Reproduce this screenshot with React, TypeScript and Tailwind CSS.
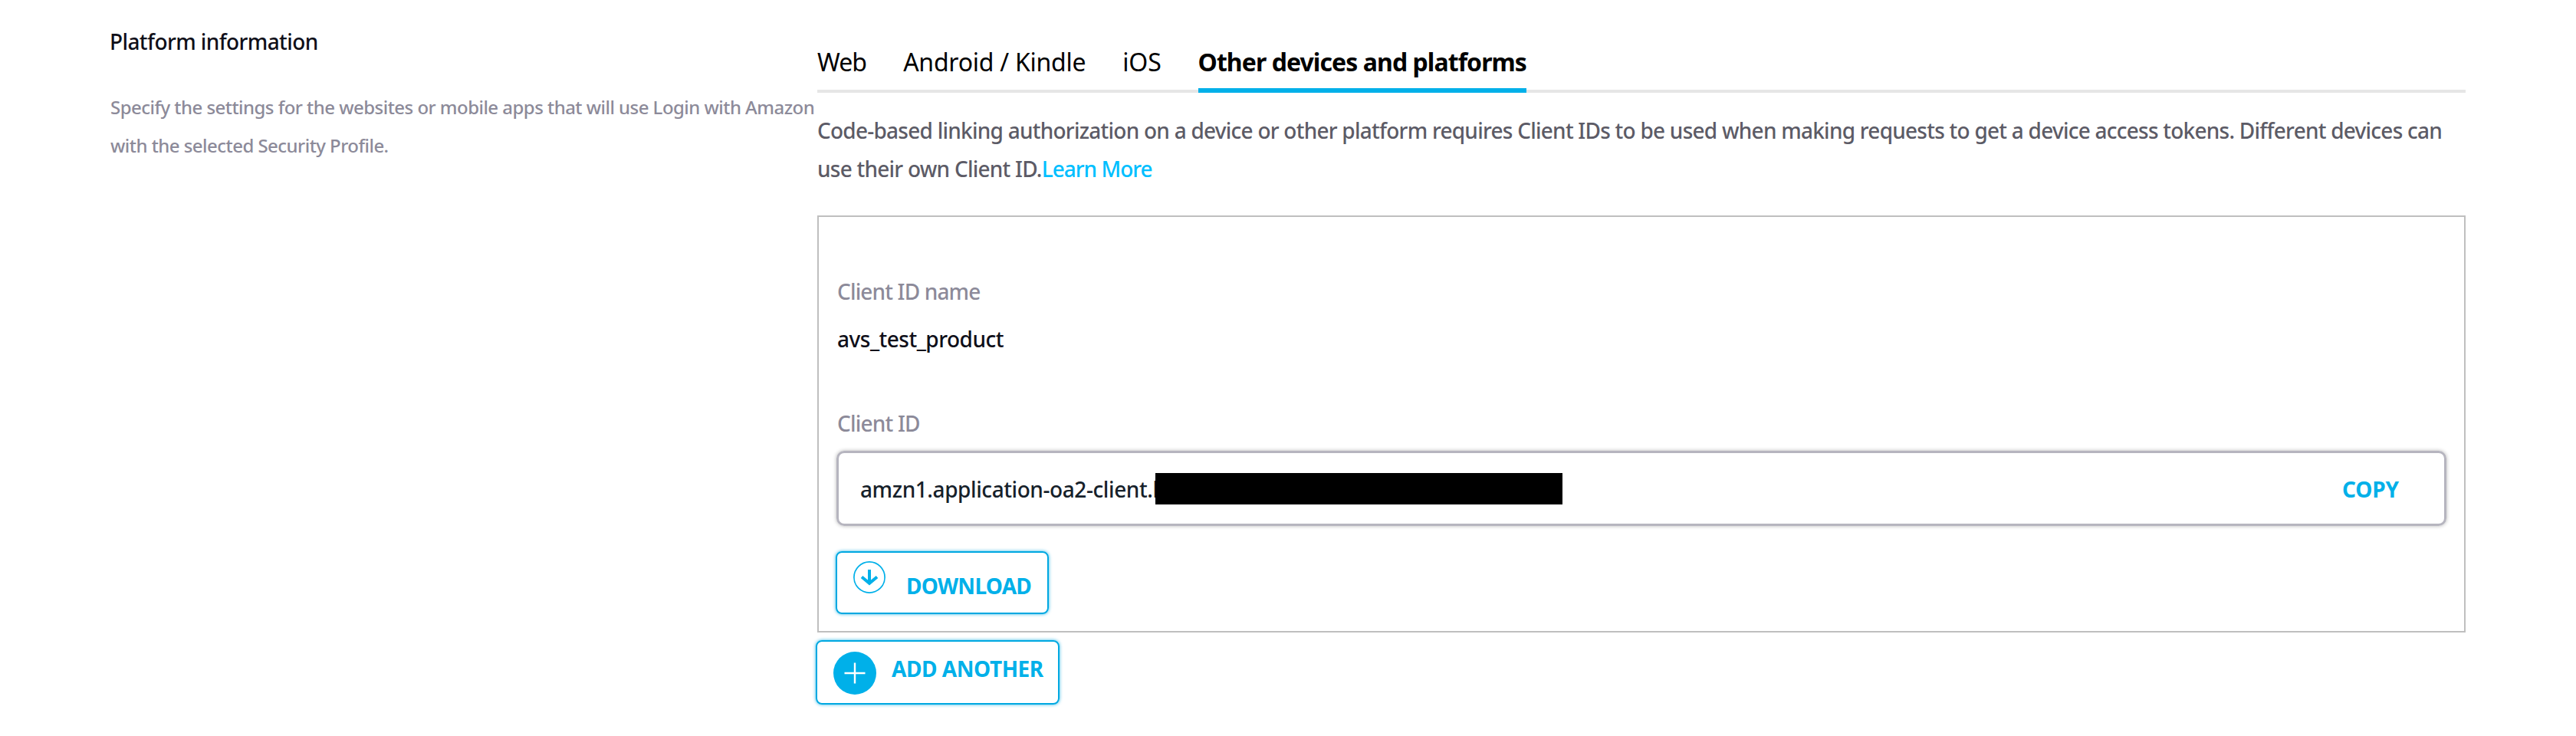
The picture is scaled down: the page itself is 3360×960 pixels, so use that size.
const tabs = [
  { label: "Web", style: "tracking-[-0.9px] mr-[48px]" },
  { label: "Android / Kindle", style: "tracking-[-0.25px] mr-[48px]" },
  { label: "iOS", style: "tracking-[-0.2px] mr-[48px]" },
];

function DownloadIcon() {
  return (
    <svg className="size-[42px]" viewBox="0 0 42 42" fill="none" stroke="#00b0e9">
      <circle cx="21" cy="21" r="20.1" strokeWidth="1.7" />
      <path d="M21 11v18M11 20.5l10 8.3 10-8.3" strokeWidth="4" />
    </svg>
  );
}

function PlusIcon() {
  return (
    <svg className="size-[56px]" viewBox="0 0 56 56">
      <circle cx="28" cy="28" r="28" fill="#00b0e9" />
      <path d="M28 14.5v27M14.5 28h27" stroke="#fff" strokeWidth="2.4" />
    </svg>
  );
}

function Sidebar() {
  return (
    <aside className="ml-[143px] mt-[34px] w-[923px] shrink-0">
      <h2 className="text-[28px] font-medium leading-[40px] tracking-[-0.6px] text-[#0f0f19]">
        Platform information
      </h2>
      <p className="ml-[1px] mt-[41px] whitespace-nowrap text-[24px] font-medium leading-[50px] tracking-[-0.54px] text-[#8c8a99]">
        Specify the settings for the websites or mobile apps that will use Login with Amazon
        <br />
        with the selected Security Profile.
      </p>
    </aside>
  );
}

function ClientCard() {
  return (
    <section className="mt-[36px] flex h-[544px] flex-col items-start border-2 border-[#bfbfbf] px-[23px] text-[28px] font-medium leading-[40px]">
      <div className="mt-[77px] pl-px tracking-[-0.85px] text-[#8c8a99]">Client ID name</div>
      <div className="mt-[22px] pl-px tracking-[-0.5px] text-[#0f0f19]">avs_test_product</div>
      <div className="mt-[70px] pl-px tracking-[-0.8px] text-[#8c8a99]">Client ID</div>
      <div className="mt-[16px] flex h-[98px] w-full items-center rounded-[10px] border-3 border-[#b6b5bf] pl-[28px] pr-[59px] shadow-[0_0_5px_rgba(0,0,0,0.3)]">
        <span className="mt-[2px] w-[386px] whitespace-nowrap tracking-[-0.42px] text-[#16212a]">
          amzn1.application-oa2-client.l
        </span>
        <span className="relative ml-[-1px] h-[41px] w-[531px] bg-black" />
        <button className="ml-auto mt-[2px] font-bold tracking-[-0.1px] text-[#00b0e9]">COPY</button>
      </div>
      <button className="-ml-px mt-[33px] flex h-[82px] w-[278px] items-start rounded-[8px] border-2 border-[#00a8e1] pl-[21px] shadow-[0_0_4px_rgba(0,168,225,0.8)]">
        <span className="mt-[11px]">
          <DownloadIcon />
        </span>
        <span className="ml-[27px] mt-[23px] font-bold tracking-[-0.7px] text-[#00b0e9]">DOWNLOAD</span>
      </button>
    </section>
  );
}

export default function App() {
  return (
    <div className="flex h-[960px] w-[3360px] items-start overflow-hidden bg-white font-['Noto_Sans',sans-serif]">
      <Sidebar />
      <main className="mt-[59px] w-[2150px] shrink-0">
        <nav className="flex h-[62px] items-start border-b-4 border-[#e6e6e6] text-[32px] leading-[44px] text-black">
          {tabs.map((t) => (
            <button key={t.label} className={t.style}>
              {t.label}
            </button>
          ))}
          <button className="h-[62px] w-[428px] whitespace-nowrap border-b-6 border-[#00b0e9] pb-[12px] text-left font-bold tracking-[-0.93px]">
            Other devices and platforms
          </button>
        </nav>
        <p className="mt-[24px] whitespace-nowrap text-[28px] font-medium leading-[50px] tracking-[-0.76px] text-[#5c5b66]">
          Code-based linking authorization on a device or other platform requires Client IDs to be used when making
          requests to get a device access tokens. Different devices can
          <br />
          use their own Client ID.
          <a className="tracking-[-1px] text-[#00bfff]">Learn More</a>
        </p>
        <ClientCard />
        <button className="-ml-[2px] mt-[10px] flex h-[84px] w-[318px] items-start rounded-[8px] border-2 border-[#00a8e1] pl-[21px] text-[28px] leading-[40px] shadow-[0_0_4px_rgba(0,168,225,0.8)]">
          <span className="mt-[13px]">
            <PlusIcon />
          </span>
          <span className="ml-[20px] mt-[15px] font-bold tracking-[-0.45px] text-[#00b0e9]">ADD ANOTHER</span>
        </button>
      </main>
    </div>
  );
}
